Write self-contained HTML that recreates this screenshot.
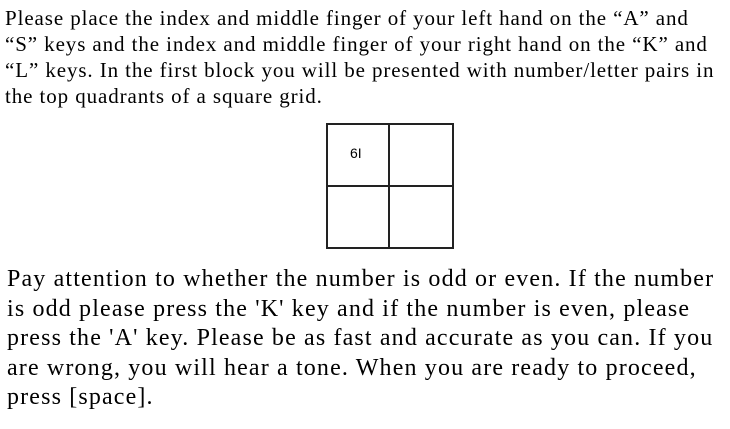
<!DOCTYPE html>
<html><head><meta charset="utf-8"><style>
html,body{margin:0;padding:0;background:#fff;width:730px;height:429px;overflow:hidden}
body{font-family:"Liberation Serif",serif;color:#000;position:relative}
.p1{position:absolute;left:5px;top:5px;font-size:21px;line-height:26px;letter-spacing:0.9px;white-space:nowrap}
.p2{position:absolute;left:7px;top:265px;font-size:24px;line-height:29.5px;letter-spacing:1.15px;white-space:nowrap}
.g{position:absolute;border:2px solid #222;box-sizing:border-box}
</style></head><body>
<div class="p1">Please place the index and middle finger of your left hand on the “A” and<br>“S” keys and the index and middle finger of your right hand on the “K” and<br>“L” keys. In the first block you will be presented with number/letter pairs in<br>the top quadrants of a square grid.</div>
<div class="g" style="left:326px;top:123px;width:128px;height:126px"></div>
<div style="position:absolute;left:388px;top:123px;width:2px;height:126px;background:#222"></div>
<div style="position:absolute;left:326px;top:185px;width:128px;height:2px;background:#222"></div>
<div style="position:absolute;left:350px;top:145px;font-family:'Liberation Sans',sans-serif;font-size:14px">6I</div>
<div class="p2">Pay attention to whether the number is odd or even. If the number<br>is odd please press the 'K' key and if the number is even, please<br>press the 'A' key. Please be as fast and accurate as you can. If you<br>are wrong, you will hear a tone. When you are ready to proceed,<br>press [space].</div>
</body></html>
